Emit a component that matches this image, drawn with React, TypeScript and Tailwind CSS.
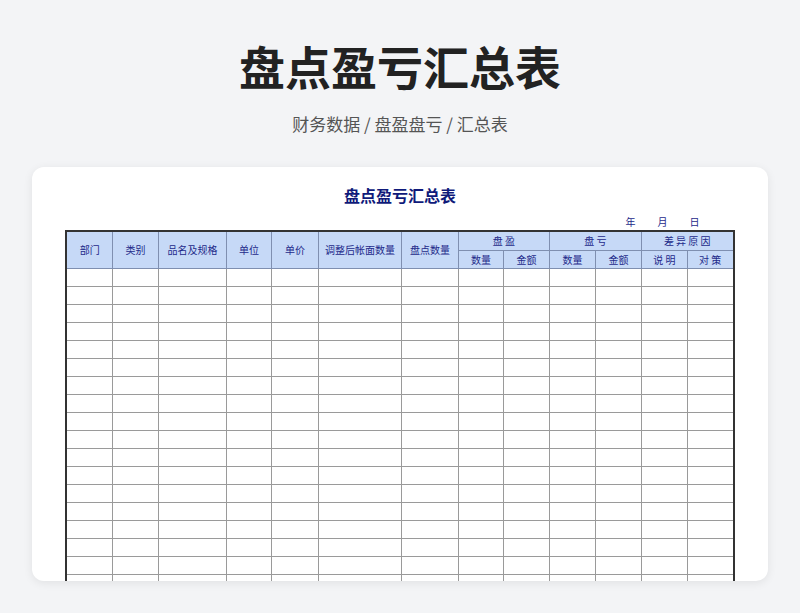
export default function App() {
  const cols = [46, 46, 68, 45, 47, 83, 57, 45, 46, 46, 46, 46, 46];
  const rows = Array.from({ length: 20 });
  const th = "border border-[#7f8fb0] bg-[#c6d9f7] text-[#1e2a8a] text-[10px] font-normal text-center p-0";
  return (
    <div className="w-[800px] h-[613px] bg-[#f3f4f6] flex flex-col items-center" style={{ fontFamily: '"Noto Sans CJK SC", "Noto Sans", sans-serif' }}>
      <h1 className="mt-[35px] text-[46px] leading-[60px] font-bold text-[#222]">盘点盈亏汇总表</h1>
      <div className="mt-[17px] text-[17px] leading-[24px] text-[#555]">财务数据 / 盘盈盘亏 / 汇总表</div>
      <div className="mt-[31px] w-[736px] h-[414px] bg-white rounded-xl shadow-[0_2px_10px_rgba(0,0,0,0.08)] overflow-hidden flex flex-col items-center">
        <div className="mt-[16px] text-[16px] leading-[24px] font-bold text-[#0f1a7a]">盘点盈亏汇总表</div>
        <div className="w-[667px] flex justify-end gap-[22px] pr-[34px] mt-[8px] text-[10px] leading-[14px] text-[#1e2a8a]">
          <span>年</span><span>月</span><span>日</span>
        </div>
        <table className="mt-[1px] border-collapse border-2 border-[#333] table-fixed" style={{ width: 667 }}>
          <colgroup>{cols.map((w, i) => <col key={i} style={{ width: w }} />)}</colgroup>
          <thead>
            <tr className="h-[19px]">
              {["部门", "类别", "品名及规格", "单位", "单价", "调整后帐面数量", "盘点数量"].map((t) => (
                <th key={t} rowSpan={2} className={th}>{t}</th>
              ))}
              <th colSpan={2} className={th}>盘 盈</th>
              <th colSpan={2} className={th}>盘 亏</th>
              <th colSpan={2} className={th}>差 异 原 因</th>
            </tr>
            <tr className="h-[18px]">
              {["数量", "金额", "数量", "金额", "说 明", "对 策"].map((t, i) => (
                <th key={i} className={th}>{t}</th>
              ))}
            </tr>
          </thead>
          <tbody>
            {rows.map((_, r) => (
              <tr key={r} className="h-[18px]">
                {cols.map((_, c) => <td key={c} className="border border-[#9a9a9a] p-0"></td>)}
              </tr>
            ))}
          </tbody>
        </table>
      </div>
    </div>
  );
}
